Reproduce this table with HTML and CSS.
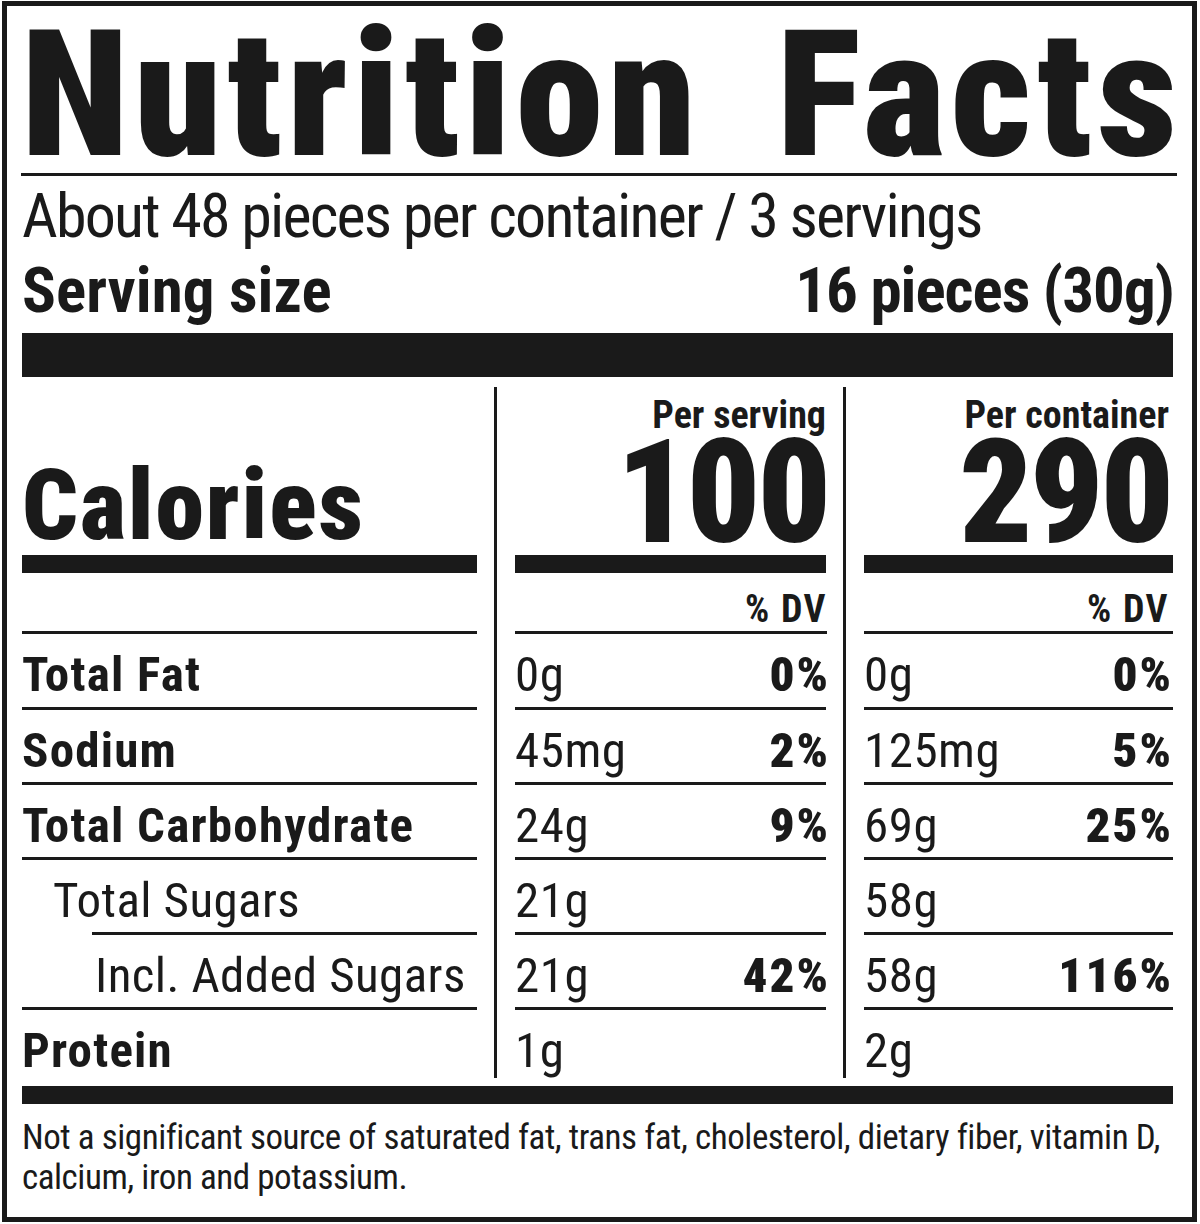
FILE: index.html
```html
<!DOCTYPE html>
<html lang="en">
<head>
<meta charset="utf-8">
<title>Nutrition Facts</title>
<link rel="stylesheet" href="styles.css">
</head>
<body>
<div class="label">
  <div class="title"><span>Nutrition</span><span>Facts</span></div>
  <div class="servings">About 48 pieces per container / 3 servings</div>
  <div class="serving-size"><span>Serving size</span><span class="amount">16 pieces (30g)</span></div>
  <div class="bar-thick"></div>

  <div class="grid">
    <div class="divider d1"></div>
    <div class="divider d2"></div>

    <div class="cell c1 cal-left"><span class="calories">Calories</span></div>
    <div class="cell c2 cal-col"><span class="per">Per serving</span><span class="big">100</span></div>
    <div class="cell c3 cal-col"><span class="per">Per container</span><span class="big">290</span></div>

    <div class="cell c1 dv-row"></div>
    <div class="cell c2 dv-row">% DV</div>
    <div class="cell c3 dv-row">% DV</div>

    <div class="cell c1 name">Total Fat</div>
    <div class="cell c2 val"><span>0g</span><b>0%</b></div>
    <div class="cell c3 val"><span>0g</span><b>0%</b></div>

    <div class="cell c1 name">Sodium</div>
    <div class="cell c2 val"><span>45mg</span><b>2%</b></div>
    <div class="cell c3 val"><span>125mg</span><b>5%</b></div>

    <div class="cell c1 name">Total Carbohydrate</div>
    <div class="cell c2 val"><span>24g</span><b>9%</b></div>
    <div class="cell c3 val"><span>69g</span><b>25%</b></div>

    <div class="cell c1 sub sub-line"><span class="sub-text">Total Sugars</span></div>
    <div class="cell c2 val"><span>21g</span></div>
    <div class="cell c3 val"><span>58g</span></div>

    <div class="cell c1 sub sub2">Incl. Added Sugars</div>
    <div class="cell c2 val"><span>21g</span><b>42%</b></div>
    <div class="cell c3 val"><span>58g</span><b>116%</b></div>

    <div class="cell c1 name last">Protein</div>
    <div class="cell c2 val last"><span>1g</span></div>
    <div class="cell c3 val last"><span>2g</span></div>
  </div>

  <div class="bar-med"></div>
  <p class="note">Not a significant source of saturated fat, trans fat, cholesterol, dietary fiber, vitamin D, calcium, iron and potassium.</p>
</div>
</body>
</html>
```
FILE: styles.css
```css
html, body {
  margin: 0;
  padding: 0;
  background: #ffffff;
}

.label {
  box-sizing: border-box;
  width: 1195px;
  height: 1221px;
  margin: 1px 0 0 2px;
  border: 5px solid #1a1a1a;
  padding: 0 19px 0 15px;
  color: #1a1a1a;
  font-family: "Roboto Condensed", "Liberation Sans Narrow", "Liberation Sans", sans-serif;
  font-weight: 400;
}

.title {
  display: flex;
  justify-content: space-between;
  height: 157px;
  padding-top: 10px;
  line-height: 157px;
  font-size: 177px;
  font-weight: 900;
  letter-spacing: 5px;
  white-space: nowrap;
  border-bottom: 3px solid #1a1a1a;
  margin-left: -1px;
  margin-right: -4px;
}

.title span:first-child {
  padding-left: 5px;
  margin-left: -5px;
}

.title span:last-child {
  margin-right: -5px;
}

.servings {
  padding-top: 2px;
  font-size: 62px;
  line-height: 75px;
  letter-spacing: -1.8px;
  white-space: nowrap;
}

.serving-size {
  display: flex;
  justify-content: space-between;
  font-size: 63px;
  line-height: 75px;
  font-weight: 700;
  white-space: nowrap;
}

.amount {
  letter-spacing: -1px;
  margin-right: -1px;
}

.bar-thick {
  height: 44px;
  margin-top: 5px;
  background: #1a1a1a;
}

.grid {
  display: grid;
  grid-template-columns: 455px 17px 3px 18px 311px 17px 3px 18px 309px;
  grid-template-rows: 196px 61px 76px 75px 75px 75px 75px 76px;
}

.divider {
  grid-row: 1 / -1;
  background: #1a1a1a;
  margin: 10px 0 8px;
}

.d1 { grid-column: 3; }
.d2 { grid-column: 7; }

.c1 { grid-column: 1; }
.c2 { grid-column: 5; }
.c3 { grid-column: 9; padding-right: 4px; }

.cell {
  box-sizing: border-box;
  border-bottom: 3px solid #1a1a1a;
  white-space: nowrap;
}

.cell.last {
  border-bottom: none;
}

.cal-left {
  border-bottom-width: 18px;
  display: flex;
  align-items: flex-end;
}

.calories {
  font-size: 98px;
  line-height: 98px;
  font-weight: 900;
  letter-spacing: 2px;
}

.cal-col {
  border-bottom-width: 18px;
  display: flex;
  flex-direction: column;
  justify-content: flex-end;
  align-items: flex-end;
  padding-bottom: 3px;
}

.per {
  font-size: 38px;
  line-height: 38px;
  font-weight: 700;
}

.big {
  font-size: 144px;
  line-height: 118px;
  font-weight: 900;
  letter-spacing: -3px;
  margin-right: -2px;
}

.dv-row {
  padding-top: 15px;
  font-size: 38px;
  line-height: 43px;
  font-weight: 700;
  letter-spacing: 1.5px;
  text-align: right;
}

.c2.dv-row {
  margin-right: -1px;
}

.name,
.sub,
.val {
  padding-top: 10px;
  font-size: 49px;
  line-height: 62px;
}

.name {
  font-weight: 700;
  letter-spacing: 1.2px;
}

.sub {
  padding-left: 31px;
  letter-spacing: 0.4px;
}

.sub-line {
  margin-left: 70px;
  padding-left: 0;
}

.sub-text {
  margin-left: -39px;
}

.sub2 {
  padding-left: 73px;
}

.val {
  display: flex;
  justify-content: space-between;
}

.val span {
  letter-spacing: 0.5px;
}

.val b {
  font-weight: 900;
  letter-spacing: 2px;
  margin-right: -4px;
}

.bar-med {
  height: 18px;
  background: #1a1a1a;
}

.note {
  margin: 0;
  padding-top: 14px;
  font-size: 35px;
  line-height: 40px;
  letter-spacing: -0.45px;
}
```
